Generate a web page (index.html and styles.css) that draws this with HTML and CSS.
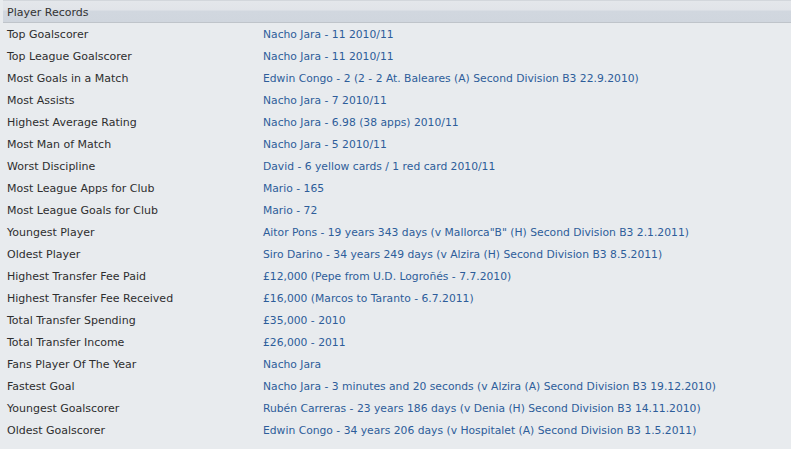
FILE: index.html
```html
<!DOCTYPE html>
<html>
<head>
<meta charset="utf-8">
<link rel="stylesheet" href="styles.css">
</head>
<body>
<div class="panel">
  <div class="header">Player Records</div>
  <div class="rows">
    <div class="row"><span class="label">Top Goalscorer</span><a class="value">Nacho Jara - 11 2010/11</a></div>
    <div class="row"><span class="label">Top League Goalscorer</span><a class="value">Nacho Jara - 11 2010/11</a></div>
    <div class="row"><span class="label">Most Goals in a Match</span><a class="value">Edwin Congo - 2 (2 - 2 At. Baleares (A) Second Division B3 22.9.2010)</a></div>
    <div class="row"><span class="label">Most Assists</span><a class="value">Nacho Jara - 7 2010/11</a></div>
    <div class="row"><span class="label">Highest Average Rating</span><a class="value">Nacho Jara - 6.98 (38 apps) 2010/11</a></div>
    <div class="row"><span class="label">Most Man of Match</span><a class="value">Nacho Jara - 5 2010/11</a></div>
    <div class="row"><span class="label">Worst Discipline</span><a class="value">David - 6 yellow cards / 1 red card 2010/11</a></div>
    <div class="row"><span class="label">Most League Apps for Club</span><a class="value">Mario - 165</a></div>
    <div class="row"><span class="label">Most League Goals for Club</span><a class="value">Mario - 72</a></div>
    <div class="row"><span class="label">Youngest Player</span><a class="value">Aitor Pons - 19 years 343 days (v Mallorca"B" (H) Second Division B3 2.1.2011)</a></div>
    <div class="row"><span class="label">Oldest Player</span><a class="value">Siro Darino - 34 years 249 days (v Alzira (H) Second Division B3 8.5.2011)</a></div>
    <div class="row"><span class="label">Highest Transfer Fee Paid</span><a class="value">£12,000 (Pepe from U.D. Logroñés - 7.7.2010)</a></div>
    <div class="row"><span class="label">Highest Transfer Fee Received</span><a class="value">£16,000 (Marcos to Taranto - 6.7.2011)</a></div>
    <div class="row"><span class="label">Total Transfer Spending</span><a class="value">£35,000 - 2010</a></div>
    <div class="row"><span class="label">Total Transfer Income</span><a class="value">£26,000 - 2011</a></div>
    <div class="row"><span class="label">Fans Player Of The Year</span><a class="value">Nacho Jara</a></div>
    <div class="row"><span class="label">Fastest Goal</span><a class="value">Nacho Jara - 3 minutes and 20 seconds (v Alzira (A) Second Division B3 19.12.2010)</a></div>
    <div class="row"><span class="label">Youngest Goalscorer</span><a class="value">Rubén Carreras - 23 years 186 days (v Denia (H) Second Division B3 14.11.2010)</a></div>
    <div class="row"><span class="label">Oldest Goalscorer</span><a class="value">Edwin Congo - 34 years 206 days (v Hospitalet (A) Second Division B3 1.5.2011)</a></div>
  </div>
</div>
</body>
</html>
```
FILE: styles.css
```css
html, body {
  margin: 0;
  padding: 0;
  background: #e8ebee;
}
body {
  width: 791px;
  height: 449px;
  overflow: hidden;
  font-family: "DejaVu Sans", sans-serif;
  font-size: 11px;
}
.panel {
  display: flex;
  flex-direction: column;
}
.header {
  height: 23px;
  box-sizing: border-box;
  margin-left: 3px;
  padding-left: 4px;
  padding-top: 1px;
  line-height: 21px;
  color: #333;
  border-top: 1px solid #d3d7dc;
  border-bottom: 1px solid #bfc4ca;
  background: linear-gradient(to bottom, #e4e7eb 0, #e1e4e9 9px, #d1d7df 10px, #d0d6de 100%);
}
.rows {
  display: flex;
  flex-direction: column;
}
.row {
  display: flex;
  height: 22px;
  align-items: center;
}
.label {
  width: 256px;
  padding-left: 7px;
  color: #2e2e2e;
  flex: none;
}
.value {
  color: #2d5d9a;
  font-size: 10.75px;
  text-decoration: none;
  white-space: nowrap;
}
```
